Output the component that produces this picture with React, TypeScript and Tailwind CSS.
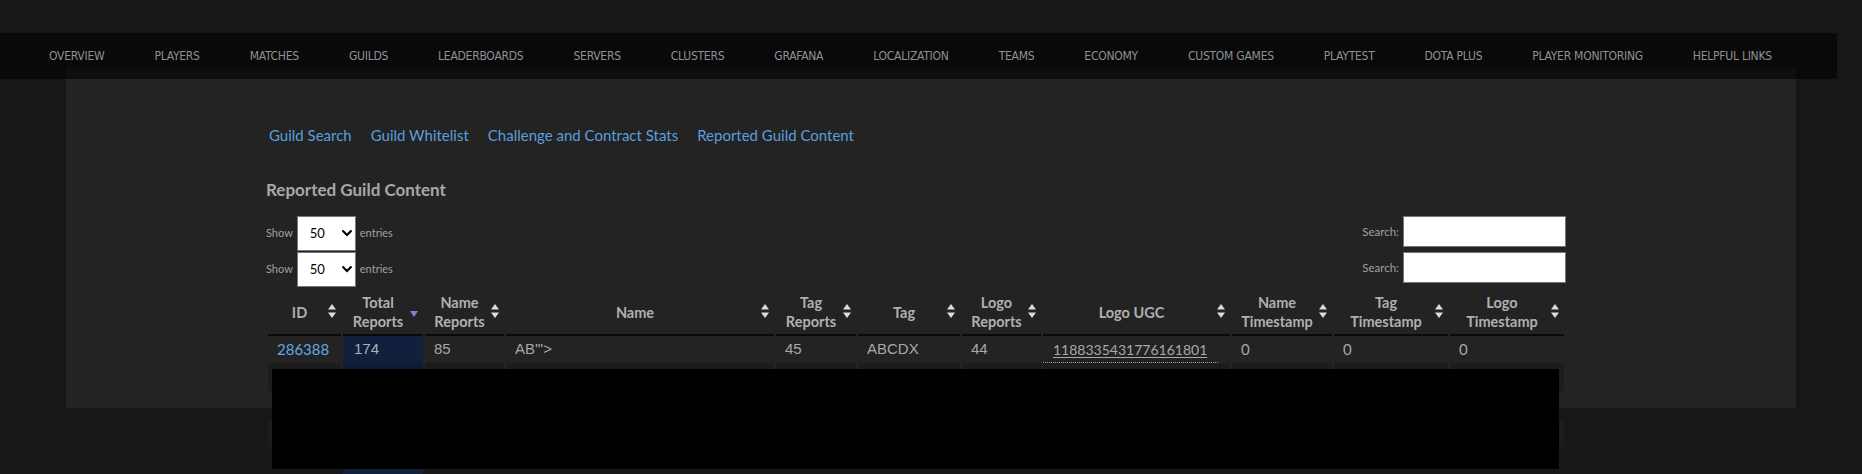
import React from "react";

const navItems = [
  "OVERVIEW",
  "PLAYERS",
  "MATCHES",
  "GUILDS",
  "LEADERBOARDS",
  "SERVERS",
  "CLUSTERS",
  "GRAFANA",
  "LOCALIZATION",
  "TEAMS",
  "ECONOMY",
  "CUSTOM GAMES",
  "PLAYTEST",
  "DOTA PLUS",
  "PLAYER MONITORING",
  "HELPFUL LINKS",
];

const links = ["Guild Search", "Guild Whitelist", "Challenge and Contract Stats", "Reported Guild Content"];

const cols = [73, 80, 79, 268, 80, 102, 79, 187, 100, 114, 114];

const headers: string[][] = [
  ["ID"],
  ["Total", "Reports"],
  ["Name", "Reports"],
  ["Name"],
  ["Tag", "Reports"],
  ["Tag"],
  ["Logo", "Reports"],
  ["Logo UGC"],
  ["Name", "Timestamp"],
  ["Tag", "Timestamp"],
  ["Logo", "Timestamp"],
];

function SortBoth() {
  return (
    <svg width="8" height="14" viewBox="0 0 8 14" className="block">
      <path d="M4 0 L8 5.5 L0 5.5 Z" fill="#dcdcdc" />
      <path d="M4 14 L8 8.5 L0 8.5 Z" fill="#dcdcdc" />
    </svg>
  );
}

function SortDesc() {
  return (
    <svg width="8" height="14" viewBox="0 0 8 14" className="block">
      <path d="M4 13 L8 7 L0 7 Z" fill="#7a7ee0" />
    </svg>
  );
}

function Chevron() {
  return (
    <svg width="10" height="7" viewBox="0 0 10 7" className="block">
      <path d="M1.2 1.2 L5 5 L8.8 1.2" fill="none" stroke="#000" strokeWidth="2.2" strokeLinecap="square" />
    </svg>
  );
}

function Controls() {
  return (
    <div className="flex justify-between items-start h-[36px]">
      <div className="flex items-center h-[35px] text-[11px] text-[#a0a0a0]">
        <span>Show</span>
        <div className="relative ml-[4px] w-[59px] h-[35px]">
          <select
            defaultValue="50"
            className="appearance-none w-full h-full bg-white text-black text-[13px] pl-[12px] border border-[#767676] outline-none"
            style={{ fontFamily: "Lato, sans-serif" }}
          >
            <option value="10">10</option>
            <option value="25">25</option>
            <option value="50">50</option>
            <option value="100">100</option>
          </select>
          <div className="absolute right-[4px] top-[14px] pointer-events-none">
            <Chevron />
          </div>
        </div>
        <span className="ml-[4px]">entries</span>
      </div>
      <div className="flex items-center h-[31px] text-[11.5px] text-[#a0a0a0]">
        <span>Search:</span>
        <input type="text" className="ml-[4px] w-[163px] h-[31px] bg-white border border-[#767676] outline-none" />
      </div>
    </div>
  );
}

function EmptyRow({ dark }: { dark: boolean }) {
  return (
    <tr className="h-[28px]">
      {cols.map((_, i) => (
        <td
          key={i}
          className={
            i === 1
              ? dark
                ? "bg-[#0f1b34]"
                : "bg-[#12203d]"
              : dark
              ? "bg-[#1c1c1c]"
              : ""
          }
        >
          &nbsp;
        </td>
      ))}
    </tr>
  );
}

export default function App() {
  return (
    <div
      className="relative h-[474px] w-[1862px] overflow-hidden bg-[#171717] pt-[33px]"
      style={{ fontFamily: "Lato, 'Open Sans', sans-serif" }}
    >
      <nav
        className="relative z-10 flex h-[46px] w-[1837px] items-center bg-black/60 pl-[24px] text-[12px] tracking-[-0.25px] text-[#8e9297]"
        style={{ fontFamily: "'DejaVu Sans Condensed', sans-serif" }}
      >
        {navItems.map((n) => (
          <span key={n} className="px-[25px] whitespace-nowrap">
            {n}
          </span>
        ))}
      </nav>

      <div className="-mt-[12px] ml-[66px] h-[341px] w-[1730px] bg-[#232323] pl-[200px] pt-[58px]">
        <div className="w-[1300px]">
          <div className="flex gap-[19px] pl-[3px] text-[15px] leading-[20px] text-[#5a9fdc]">
            {links.map((l) => (
              <a key={l} href="#" className="whitespace-nowrap">
                {l}
              </a>
            ))}
          </div>

          <h2 className="mt-[33px] text-[17px] font-bold leading-[24px] text-[#a8a8a8]">Reported Guild Content</h2>

          <div className="mt-[14px]">
            <Controls />
            <Controls />
          </div>

          <table className="w-full table-fixed border-separate [border-spacing:2px_0]">
            <colgroup>
              {cols.map((w, i) => (
                <col key={i} style={{ width: w }} />
              ))}
            </colgroup>
            <thead>
              <tr>
                {headers.map((h, i) => (
                  <th
                    key={i}
                    className="relative border-b-2 border-[#0a0a0a] pb-[3px] pl-[8px] pr-[18px] pt-[5px] text-center text-[14.5px] font-bold leading-[19px] text-[#b0b0b0]"
                  >
                    {h.map((line, j) => (
                      <div key={j} className="whitespace-nowrap">
                        {line}
                      </div>
                    ))}
                    <span className="absolute right-[5px] top-1/2 -translate-y-1/2">
                      {i === 1 ? <SortDesc /> : <SortBoth />}
                    </span>
                  </th>
                ))}
              </tr>
            </thead>
            <tbody className="text-[#a8a8a8]">
              <tr className="h-[27px]">
                <td className="pl-[9px] text-[15px] text-[#62a8e6]">286388</td>
                <td className="bg-[#12203d] pl-[11px] text-[15px] text-[#a9b0bd]" style={{ fontFamily: "'Liberation Sans', Arial, sans-serif" }}>
                  174
                </td>
                <td className="pl-[9px] text-[15px]" style={{ fontFamily: "'Liberation Sans', Arial, sans-serif" }}>
                  85
                </td>
                <td className="pl-[9px] text-[15px]" style={{ fontFamily: "'Liberation Sans', Arial, sans-serif" }}>
                  AB'"&gt;
                </td>
                <td className="pl-[9px] text-[15px]" style={{ fontFamily: "'Liberation Sans', Arial, sans-serif" }}>
                  45
                </td>
                <td className="pl-[9px] text-[15px]" style={{ fontFamily: "'Liberation Sans', Arial, sans-serif" }}>
                  ABCDX
                </td>
                <td className="pl-[9px] text-[15px]" style={{ fontFamily: "'Liberation Sans', Arial, sans-serif" }}>
                  44
                </td>
                <td className="p-0">
                  <div className="mr-[12px] flex h-[27px] items-center border-b border-dotted border-[#9a9a9a] pl-[10px]">
                    <a href="#" className="text-[14px] text-[#a8a8a8] underline underline-offset-2">
                      1188335431776161801
                    </a>
                  </div>
                </td>
                <td className="pl-[9px] text-[15px]">0</td>
                <td className="pl-[9px] text-[15px]">0</td>
                <td className="pl-[9px] text-[15px]">0</td>
              </tr>
              <EmptyRow dark />
              <EmptyRow dark={false} />
              <EmptyRow dark />
              <EmptyRow dark={false} />
            </tbody>
          </table>
        </div>
      </div>

      <div className="absolute left-[272px] top-[369px] h-[100px] w-[1287px] bg-black" />
    </div>
  );
}
